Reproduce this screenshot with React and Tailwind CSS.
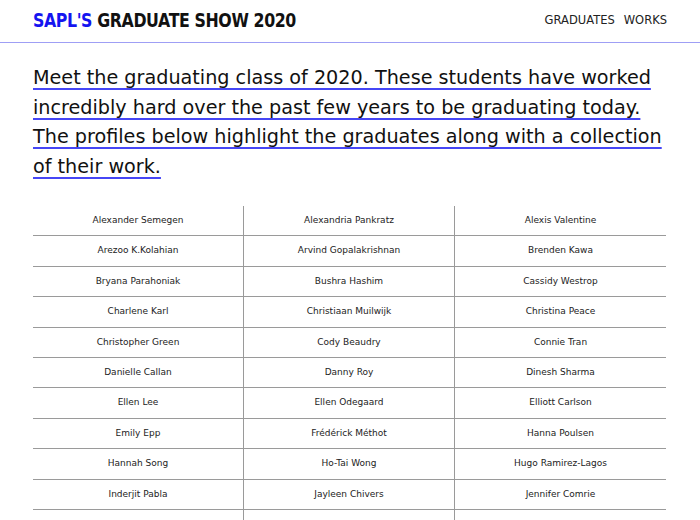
import React from 'react';

const names = [
  'Alexander Semegen', 'Alexandria Pankratz', 'Alexis Valentine',
  'Arezoo K.Kolahian', 'Arvind Gopalakrishnan', 'Brenden Kawa',
  'Bryana Parahoniak', 'Bushra Hashim', 'Cassidy Westrop',
  'Charlene Karl', 'Christiaan Muilwijk', 'Christina Peace',
  'Christopher Green', 'Cody Beaudry', 'Connie Tran',
  'Danielle Callan', 'Danny Roy', 'Dinesh Sharma',
  'Ellen Lee', 'Ellen Odegaard', 'Elliott Carlson',
  'Emily Epp', 'Frédérick Méthot', 'Hanna Poulsen',
  'Hannah Song', 'Ho-Tai Wong', 'Hugo Ramirez-Lagos',
  'Inderjit Pabla', 'Jayleen Chivers', 'Jennifer Comrie',
  '', '', '',
];

const intro = [
  'Meet the graduating class of 2020. These students have worked',
  'incredibly hard over the past few years to be graduating today.',
  'The profiles below highlight the graduates along with a collection',
  'of their work.',
];

export default function App() {
  return (
    <div className="min-h-screen bg-white text-[#111]" style={{ fontFamily: '"DejaVu Sans", sans-serif' }}>
      <header className="flex items-center justify-between h-[43px] px-[33px] border-b border-[#9f9ff5]">
        <h1
          className="text-[20px] font-bold leading-none pb-[2px] tracking-tight whitespace-nowrap origin-left scale-x-[0.79]"
          style={{ fontFamily: '"DejaVu Sans", sans-serif' }}
        >
          <span className="text-[#1414f0]">SAPL'S</span> GRADUATE SHOW 2020
        </h1>
        <nav className="flex gap-[9px] text-[11.5px] text-[#222] pb-[1px]">
          <a href="#">GRADUATES</a>
          <a href="#">WORKS</a>
        </nav>
      </header>

      <main className="px-[33px]">
        <p className="pt-[20px] text-[19.2px] leading-[29.7px]">
          {intro.map((line) => (
            <span key={line} className="block whitespace-nowrap">
              <a href="#" className="underline decoration-[#4646f5] decoration-[1.5px] underline-offset-[4px]">{line}</a>
            </span>
          ))}
        </p>

        <div className="grid grid-cols-3 mt-[24px] w-[633px] text-[9px] text-[#222]">
          {names.map((n, i) => (
            <div
              key={i}
              className={`h-[30.45px] flex items-center justify-center border-b border-[#9a9a9a] ${i % 3 !== 2 ? 'border-r' : ''}`}
            >
              {n}
            </div>
          ))}
        </div>
      </main>
    </div>
  );
}
